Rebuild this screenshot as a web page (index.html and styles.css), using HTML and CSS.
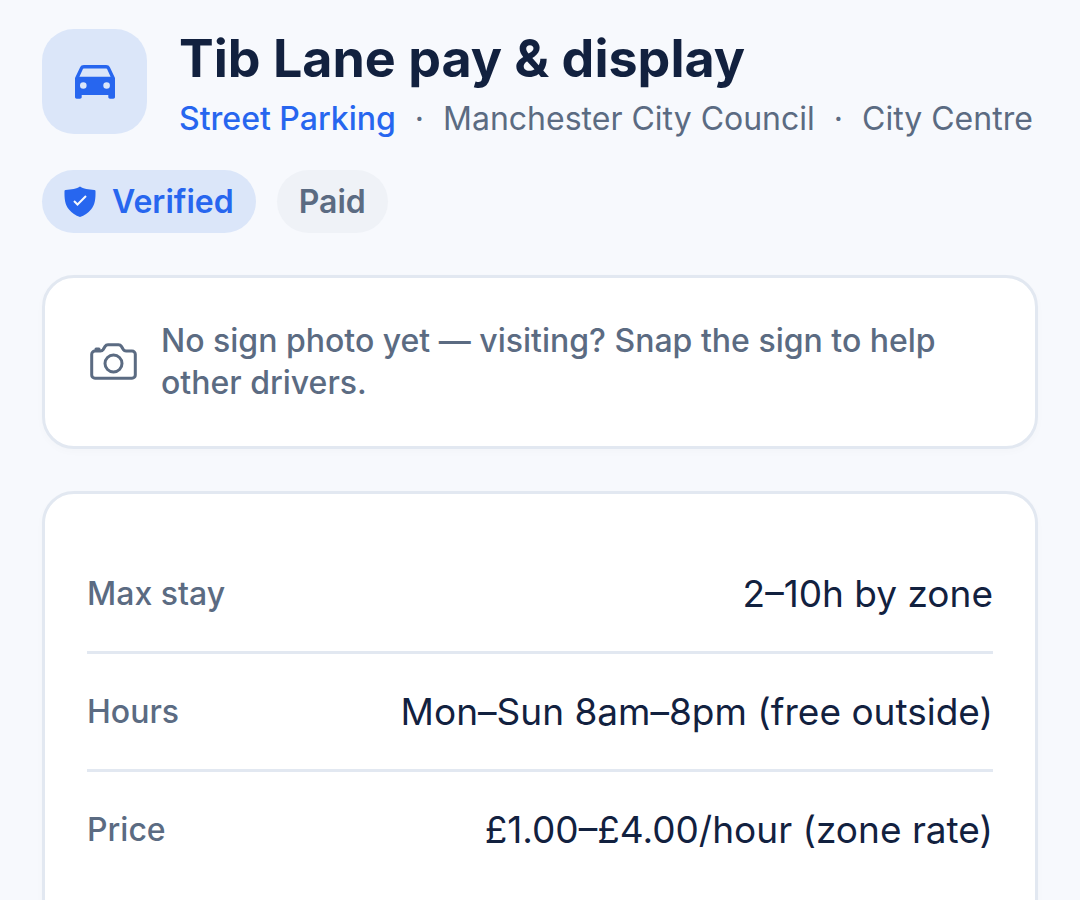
FILE: index.html
```html
<!DOCTYPE html>
<html lang="en">
<head>
  <meta charset="UTF-8" />
  <meta name="viewport" content="width=device-width, initial-scale=1.0"/>
  <title>Tib Lane pay &amp; display</title>
  <link rel="stylesheet" href="styles.css">
</head>
<body>

  <main class="page">
    <header class="header">
      <div class="header-icon">
        <svg viewBox="0 0 40 34" aria-hidden="true">
          <path fill="currentColor" fill-rule="evenodd" d="M9 0h22c2 0 3.300.8 4 2.600L40 13v19c0 1-.7 1.700-1.700 1.700h-3.300c-1 0-1.700-.7-1.700-1.700v-2H6.700v2c0 1-.7 1.700-1.700 1.700H1.700C.7 33.700 0 33 0 32V13L5 2.600C5.700.8 7 0 9 0zM9.200 3.400c-.8 0-1.200.3-1.500 1L4.400 11.700h31.200L32.300 4.400c-.3-.7-.7-1-1.500-1zM8.300 17.200a3.300 3.300 0 1 0 0 6.600 3.300 3.300 0 1 0 0-6.600zM31.600 17.200a3.300 3.300 0 1 0 0 6.600 3.300 3.300 0 1 0 0-6.600z"/>
        </svg>
      </div>
      <div class="header-text">
        <h1>Tib Lane pay &amp; display</h1>
        <div class="meta">
          <a href="#street-parking">Street Parking</a>
          <span>·</span>
          <span>Manchester City Council</span>
          <span>·</span>
          <span>City Centre</span>
        </div>
      </div>
    </header>

    <div class="chips">
      <span class="chip chip-verified">
        <svg viewBox="0 0 32 32" aria-hidden="true">
          <path fill="currentColor" d="M16 .5C19 2.600 25 3.800 30.300 3.900q1.200.1 1.200 1.200C31.700 13 31 19 27 23.500 24 27 20.500 29.500 16 31 11.500 29.500 8 27 5 23.500 1 19 .3 13 .5 5.100q0-1.100 1.200-1.200C7 3.800 13 2.600 16 .5z"/>
          <path class="tick" d="M10 15l3.500 3.500 8.500-8.500"/>
        </svg>
        Verified
      </span>
      <span class="chip">Paid</span>
    </div>

    <section class="card notice">
      <svg viewBox="0 0 48 40" aria-hidden="true">
        <path d="M6 9h5.500c1.200 0 2-.5 2.600-1.400l2-3.200c.7-1.100 1.600-1.600 2.900-1.600h10.500c1.300 0 2.200.5 2.900 1.600l2 3.200C35 8.500 35.800 9 37 9h6c1.900 0 3.300 1.400 3.300 3.300v20.600c0 1.900-1.400 3.300-3.300 3.300H6c-1.900 0-3.300-1.400-3.300-3.300V12.300C2.700 10.400 4.100 9 6 9z"/>
        <path d="M7 8.500v-1.500h3v1.500"/>
        <circle cx="24.500" cy="21.500" r="8.500"/>
      </svg>
      <p>No sign photo yet — visiting? Snap the sign to help other drivers.</p>
    </section>

    <section class="card">
      <dl class="details">
        <div class="row">
          <dt>Max stay</dt>
          <dd>2–10h by zone</dd>
        </div>
        <div class="row">
          <dt>Hours</dt>
          <dd>Mon–Sun 8am–8pm (free outside)</dd>
        </div>
        <div class="row">
          <dt>Price</dt>
          <dd>£1.00–£4.00/hour (zone rate)</dd>
        </div>
      </dl>
    </section>
  </main>

</body>
</html>
```

FILE: styles.css
```css
* {
  box-sizing: border-box;
}

body {
  margin: 0;
  font-family: Inter, "Liberation Sans", sans-serif;
  font-size: 32px;
  line-height: 42px;
  color: #12213f;
  background: #f7f9fd;
}

.page {
  padding: 29px 42px 0;
}

/* Header */
.header {
  display: flex;
  align-items: flex-start;
  gap: 32px;
  margin-bottom: 30px;
}
.header-icon {
  display: flex;
  align-items: center;
  justify-content: center;
  flex: none;
  width: 105px;
  height: 105px;
  border-radius: 32px;
  background: #dbe6f9;
  color: #2766ef;
}
.header-icon svg {
  width: 40px;
  height: 34px;
}
h1 {
  margin: 0 0 9px;
  font-size: 52px;
  line-height: 60px;
  font-weight: 700;
}
.meta {
  display: flex;
  flex-wrap: wrap;
  column-gap: 19px;
  color: #5b6b82;
}
.meta a {
  color: #2766ef;
  font-weight: 500;
  text-decoration: none;
}

/* Chips */
.chips {
  display: flex;
  flex-wrap: wrap;
  gap: 21px;
  margin-bottom: 42px;
}
.chip {
  display: flex;
  align-items: center;
  gap: 16px;
  height: 63px;
  padding: 0 22px;
  border-radius: 32px;
  background: #eff2f7;
  color: #5b6b82;
  font-weight: 600;
}
.chip-verified {
  background: #dbe6f9;
  color: #2766ef;
}
.chip svg {
  width: 32px;
  height: 32px;
}
.tick {
  fill: none;
  stroke: #f7f9fd;
  stroke-width: 2;
}

/* Cards */
.card {
  margin-bottom: 42px;
  padding: 42px;
  border: 3px solid #e2e8f1;
  border-radius: 32px;
  background: #fff;
  box-shadow: 0 3px 8px rgba(18, 33, 63, 0.02);
}
.notice {
  display: flex;
  align-items: center;
  gap: 24px;
  padding: 42px 44px;
  color: #5b6b82;
  font-weight: 500;
}
.notice svg {
  flex: none;
  width: 48px;
  height: 40px;
  fill: none;
  stroke: currentColor;
  stroke-width: 3;
  stroke-linejoin: round;
}
.notice p {
  margin: 0;
}

.details {
  margin: 0;
}
.row {
  display: flex;
  align-items: center;
  justify-content: space-between;
  gap: 32px;
  padding: 32px 0;
}
.row + .row {
  border-top: 3px solid #e2e8f1;
}
dt {
  color: #5b6b82;
  font-weight: 500;
}
dd {
  margin: 0;
  font-size: 37px;
  line-height: 51px;
  text-align: right;
}
```
